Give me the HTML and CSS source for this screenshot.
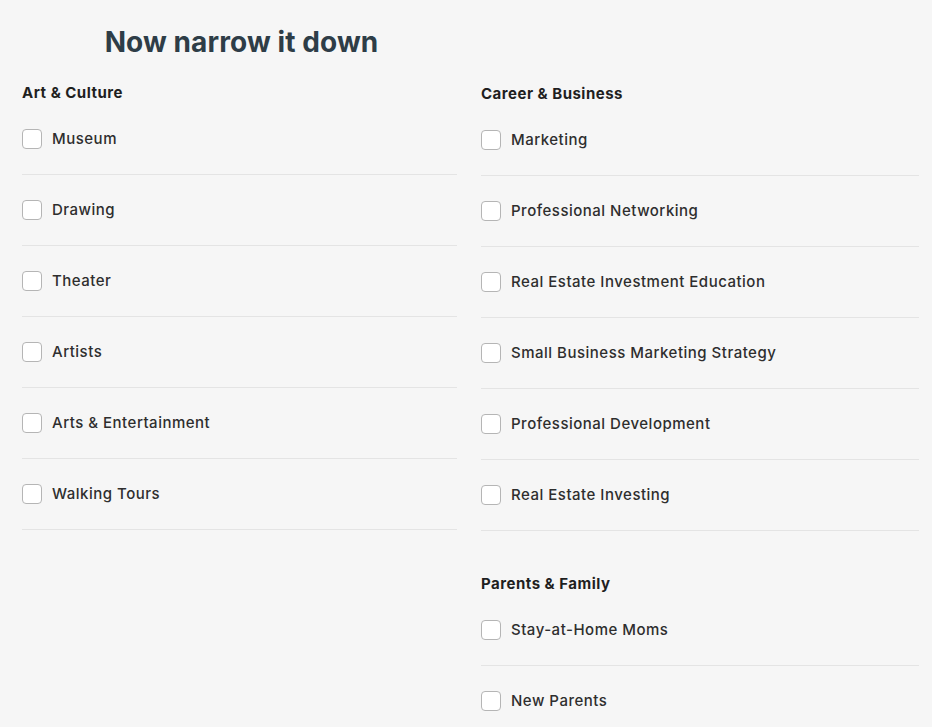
FILE: index.html
```html
<!DOCTYPE html>
<html>
<head>
<meta charset="utf-8">
<link rel="stylesheet" href="styles.css">
</head>
<body>
<div class="page">
  <div class="col">
    <h1 class="title">Now narrow it down</h1>
    <section class="group">
      <h2 class="group-title">Art &amp; Culture</h2>
      <ul class="list">
        <li class="row"><span class="box"></span><span class="label">Museum</span></li>
        <li class="row"><span class="box"></span><span class="label">Drawing</span></li>
        <li class="row"><span class="box"></span><span class="label">Theater</span></li>
        <li class="row"><span class="box"></span><span class="label">Artists</span></li>
        <li class="row"><span class="box"></span><span class="label">Arts &amp; Entertainment</span></li>
        <li class="row"><span class="box"></span><span class="label">Walking Tours</span></li>
      </ul>
    </section>
  </div>
  <div class="col col-right">
    <section class="group">
      <h2 class="group-title">Career &amp; Business</h2>
      <ul class="list">
        <li class="row"><span class="box"></span><span class="label">Marketing</span></li>
        <li class="row"><span class="box"></span><span class="label">Professional Networking</span></li>
        <li class="row"><span class="box"></span><span class="label">Real Estate Investment Education</span></li>
        <li class="row"><span class="box"></span><span class="label">Small Business Marketing Strategy</span></li>
        <li class="row"><span class="box"></span><span class="label">Professional Development</span></li>
        <li class="row"><span class="box"></span><span class="label">Real Estate Investing</span></li>
      </ul>
    </section>
    <section class="group group-next">
      <h2 class="group-title">Parents &amp; Family</h2>
      <ul class="list">
        <li class="row"><span class="box"></span><span class="label">Stay-at-Home Moms</span></li>
        <li class="row"><span class="box"></span><span class="label">New Parents</span></li>
      </ul>
    </section>
  </div>
</div>
</body>
</html>
```
FILE: styles.css
```css
html, body {
  margin: 0;
  padding: 0;
  background: #f6f6f6;
  font-family: Inter, "Liberation Sans", Arial, sans-serif;
  color: #2b2b2b;
}
.page {
  display: grid;
  grid-template-columns: 435px 438px;
  column-gap: 24px;
  padding: 0 13px 0 22px;
}
.col {
  display: flex;
  flex-direction: column;
}
.col-right {
  padding-top: 83px;
}
.title {
  margin: 24px 0 0;
  padding-left: 4px;
  height: 36px;
  line-height: 36px;
  text-align: center;
  font-size: 28px;
  font-weight: 700;
  color: #2e3d47;
  letter-spacing: 0.1px;
}
.group-title {
  margin: 0;
  height: 22px;
  line-height: 22px;
  font-size: 15px;
  font-weight: 700;
  color: #1f1f1f;
  letter-spacing: 0.5px;
}
.col .title + .group {
  margin-top: 22px;
}
.group-next {
  margin-top: 42px;
}
.list {
  list-style: none;
  margin: 0;
  padding: 0;
}
.row {
  display: flex;
  align-items: center;
  gap: 10px;
  height: 69px;
  padding-bottom: 1px;
  border-bottom: 1px solid #e4e4e4;
}
.box {
  width: 18px;
  height: 18px;
  border: 1px solid #b5b5b5;
  border-radius: 4px;
  background: #ffffff;
  flex: none;
}
.label {
  font-size: 15px;
  font-weight: 500;
  color: #2e2e2e;
  letter-spacing: 0.5px;
}
```
